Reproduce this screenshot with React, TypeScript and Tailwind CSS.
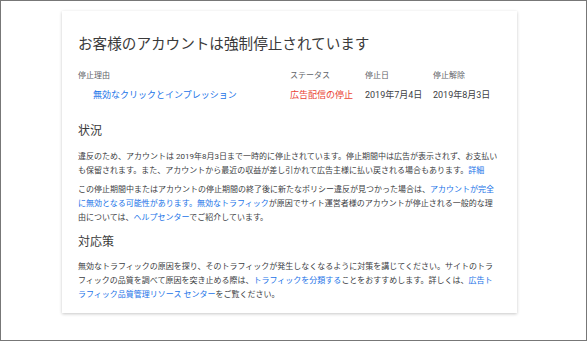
const font = { fontFamily: 'Roboto, "Noto Sans CJK JP", sans-serif' };

function Link({ children }: { children: React.ReactNode }) {
  return <a className="text-[#1a73e8]">{children}</a>;
}

export default function App() {
  return (
    <div style={font} className="h-[341px] w-[587px] border border-[#777] bg-white">
      <div className="ml-[61px] mt-[10px] h-[302px] w-[455px] bg-white pl-4 pr-2 pt-[23px] shadow-[0_1px_3px_rgba(0,0,0,0.22)]">
        <h1 className="text-[14.6px] leading-[20px] text-[#3a3a3a]">
          お客様のアカウントは強制停止されています
        </h1>

        {/* table */}
        <div className="mt-4 grid grid-cols-[212px_75px_68px_1fr] text-[8px] leading-[12px] text-[#5f6368]">
          <div>停止理由</div>
          <div>ステータス</div>
          <div>停止日</div>
          <div>停止解除</div>
        </div>
        <div className="mt-[6px] grid grid-cols-[212px_75px_68px_1fr] text-[9px] leading-[14px] text-[#3c4043]">
          <div className="pl-[15px] text-[#1a73e8]">無効なクリックとインプレッション</div>
          <div className="text-[#ea4335]">広告配信の停止</div>
          <div>2019年7月4日</div>
          <div>2019年8月3日</div>
        </div>

        <h2 className="mt-5 text-[12px] leading-[18px] text-[#3a3a3a]">状況</h2>
        <div className="mt-[10px] text-[8px] leading-[14px] text-[#3c4043]">
          <p>
            違反のため、アカウントは 2019年8月3日まで一時的に停止されています。停止期間中は広告が表示されず、お支払い
            <br />
            も保留されます。また、アカウントから最近の収益が差し引かれて広告主様に払い戻される場合もあります。<Link>詳細</Link>
          </p>
          <p className="mt-[5px]">
            この停止期間中またはアカウントの停止期間の終了後に新たなポリシー違反が見つかった場合は、<Link>アカウントが完全<br />に無効となる可能性があります。</Link>
            <Link>無効なトラフィック</Link>が原因でサイト運営者様のアカウントが停止される一般的な理
            <br />
            由については、<Link>ヘルプセンター</Link>でご紹介しています。
          </p>
        </div>

        <h2 className="mt-2 text-[12px] leading-[18px] text-[#3a3a3a]">対応策</h2>
        <div className="mt-[9px] text-[8px] leading-[14px] text-[#3c4043]">
          <p>
            無効なトラフィックの原因を探り、そのトラフィックが発生しなくなるように対策を講じてください。サイトのトラ
            <br />
            フィックの品質を調べて原因を突き止める際は、<Link>トラフィックを分類する</Link>ことをおすすめします。詳しくは、<Link>広告ト<br />ラフィック品質管理リソース センター</Link>をご覧ください。
          </p>
        </div>
      </div>
    </div>
  );
}
